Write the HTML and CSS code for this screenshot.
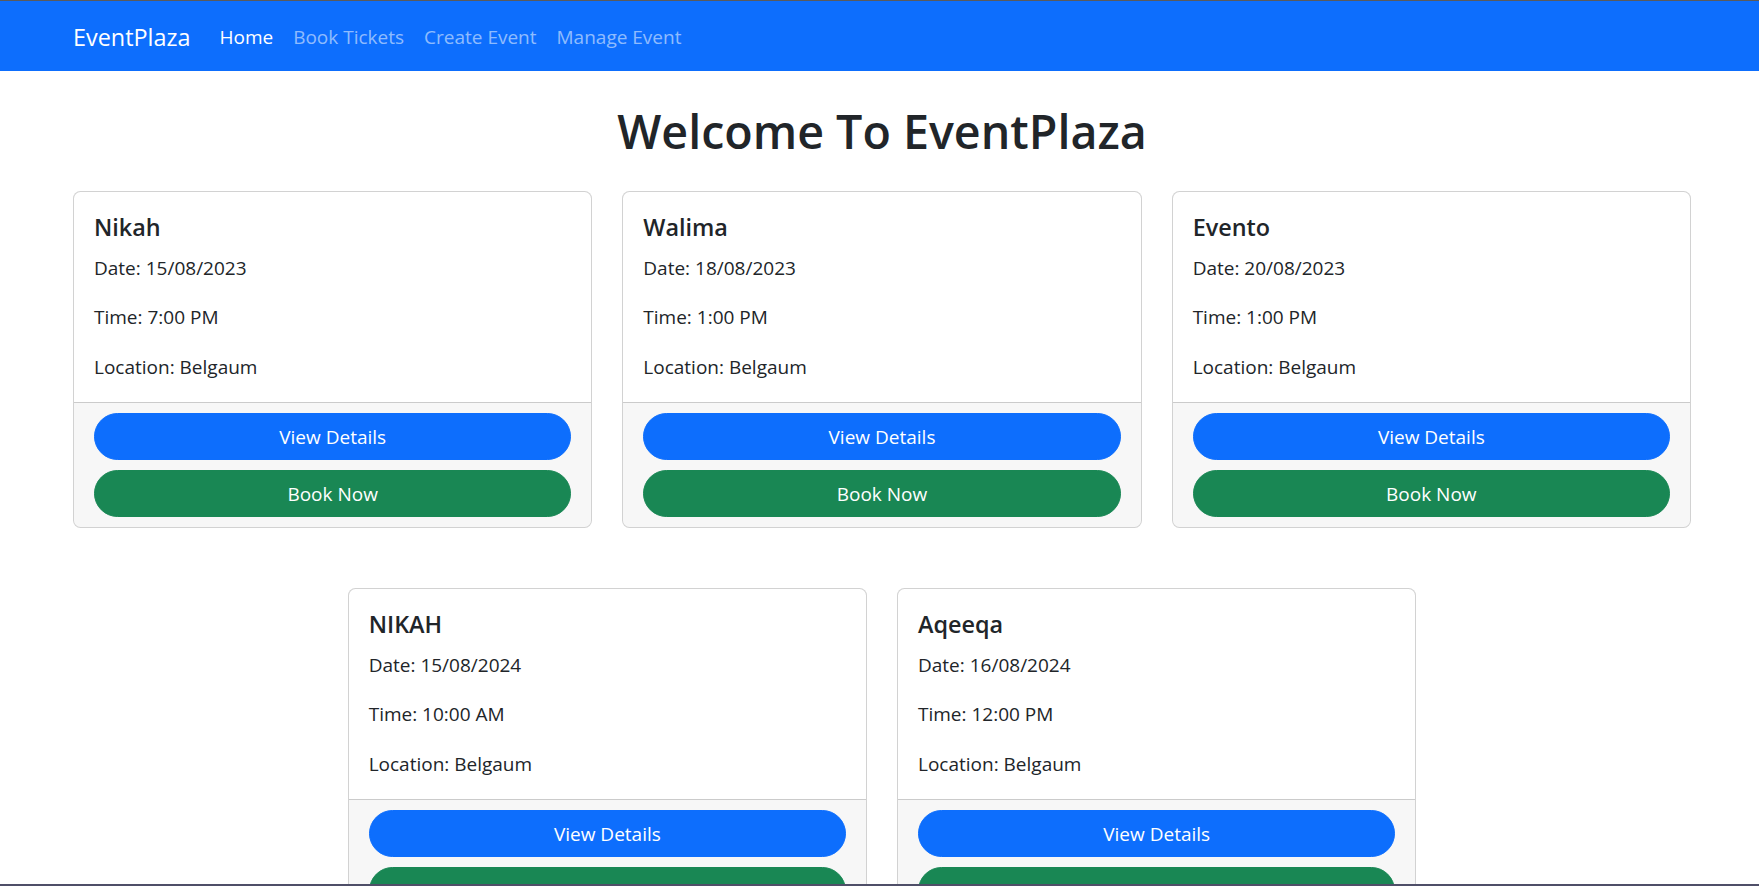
FILE: index.html
```html
<!DOCTYPE html>
<html lang="en">
<head>
<meta charset="utf-8">
<title>EventPlaza</title>
<link rel="stylesheet" href="styles.css">
</head>
<body>
<nav class="navbar">
  <div class="nav-inner">
    <a class="brand" href="#">EventPlaza</a>
    <ul class="nav">
      <li><a class="nav-link active" href="#">Home</a></li>
      <li><a class="nav-link" href="#">Book Tickets</a></li>
      <li><a class="nav-link" href="#">Create Event</a></li>
      <li><a class="nav-link" href="#">Manage Event</a></li>
    </ul>
  </div>
</nav>
<main class="container">
  <h1 class="page-title">Welcome To EventPlaza</h1>
  <div class="cards">
    <div class="card">
      <div class="card-body">
        <h5 class="card-title">Nikah</h5>
        <p>Date: 15/08/2023</p>
        <p>Time: 7:00 PM</p>
        <p>Location: Belgaum</p>
      </div>
      <div class="card-footer">
        <a class="btn btn-primary" href="#">View Details</a>
        <a class="btn btn-success" href="#">Book Now</a>
      </div>
    </div>
    <div class="card">
      <div class="card-body">
        <h5 class="card-title">Walima</h5>
        <p>Date: 18/08/2023</p>
        <p>Time: 1:00 PM</p>
        <p>Location: Belgaum</p>
      </div>
      <div class="card-footer">
        <a class="btn btn-primary" href="#">View Details</a>
        <a class="btn btn-success" href="#">Book Now</a>
      </div>
    </div>
    <div class="card">
      <div class="card-body">
        <h5 class="card-title">Evento</h5>
        <p>Date: 20/08/2023</p>
        <p>Time: 1:00 PM</p>
        <p>Location: Belgaum</p>
      </div>
      <div class="card-footer">
        <a class="btn btn-primary" href="#">View Details</a>
        <a class="btn btn-success" href="#">Book Now</a>
      </div>
    </div>
    <div class="card">
      <div class="card-body">
        <h5 class="card-title">NIKAH</h5>
        <p>Date: 15/08/2024</p>
        <p>Time: 10:00 AM</p>
        <p>Location: Belgaum</p>
      </div>
      <div class="card-footer">
        <a class="btn btn-primary" href="#">View Details</a>
        <a class="btn btn-success" href="#">Book Now</a>
      </div>
    </div>
    <div class="card">
      <div class="card-body">
        <h5 class="card-title">Aqeeqa</h5>
        <p>Date: 16/08/2024</p>
        <p>Time: 12:00 PM</p>
        <p>Location: Belgaum</p>
      </div>
      <div class="card-footer">
        <a class="btn btn-primary" href="#">View Details</a>
        <a class="btn btn-success" href="#">Book Now</a>
      </div>
    </div>
  </div>
</main>
<div class="window-edge"></div>
</body>
</html>
```
FILE: styles.css
```css
html {
  scrollbar-width: none;
}
html::-webkit-scrollbar {
  display: none;
}
body {
  margin: 0;
  border-top: 1px solid #5a5a5a;
  font-family: "Open Sans", "Noto Sans", sans-serif;
  font-size: 19px;
  line-height: 30px;
  color: #212529;
  background: #fff;
}
a {
  text-decoration: none;
}

/* navbar */
.navbar {
  background: #0d6efd;
  height: 70px;
  display: flex;
  align-items: center;
}
.nav-inner {
  margin-left: 73px;
  margin-top: 2px;
  display: flex;
  align-items: center;
}
.brand {
  color: #fff;
  font-size: 23.4px;
  line-height: 38px;
  margin-right: 19px;
}
.nav {
  display: flex;
  list-style: none;
  margin: 0;
  padding: 0;
}
.nav-link {
  display: block;
  padding: 8px 10px;
  font-size: 19px;
  line-height: 30px;
  color: rgba(255, 255, 255, 0.55);
}
.nav-link.active {
  color: #fff;
}

/* content */
.container {
  width: 1618px;
  margin-left: 73px;
  padding-bottom: 60px;
}
.page-title {
  margin: 30px 0 30px;
  text-align: center;
  font-size: 46.6px;
  line-height: 60px;
  font-weight: 600;
}
.cards {
  display: flex;
  flex-wrap: wrap;
  justify-content: center;
  column-gap: 30px;
  row-gap: 60px;
}
.card {
  width: calc((100% - 60px) / 3);
  box-sizing: border-box;
  border: 1px solid rgba(0, 0, 0, 0.175);
  border-radius: 7.5px;
  overflow: hidden;
  background: #fff;
}
.card-body {
  padding: 20px 20px 20px;
}
.card-title {
  margin: 0 0 10px;
  font-size: 23.4px;
  line-height: 30px;
  font-weight: 600;
}
.card-body p {
  margin: 0 0 20px;
}
.card-body p:first-of-type {
  padding-top: 1px;
  margin-bottom: 19px;
}
.card-body p:last-child {
  margin-bottom: 0;
}
.card-footer {
  padding: 10px 20px;
  background: rgba(0, 0, 0, 0.03);
  border-top: 1px solid rgba(0, 0, 0, 0.175);
  display: flex;
  flex-direction: column;
  gap: 10px;
}
.btn {
  display: block;
  box-sizing: border-box;
  height: 47px;
  padding: 7.5px 15px;
  border: 1px solid transparent;
  border-radius: 999px;
  text-align: center;
  color: #fff;
  font-size: 19px;
  line-height: 31px;
}
.btn-primary {
  background: #0d6efd;
  border-color: #0d6efd;
}
.btn-success {
  background: #198754;
  border-color: #198754;
}

.window-edge {
  position: fixed;
  left: 0;
  right: 0;
  bottom: 0;
  height: 2px;
  background: #4f4f68;
}
```
